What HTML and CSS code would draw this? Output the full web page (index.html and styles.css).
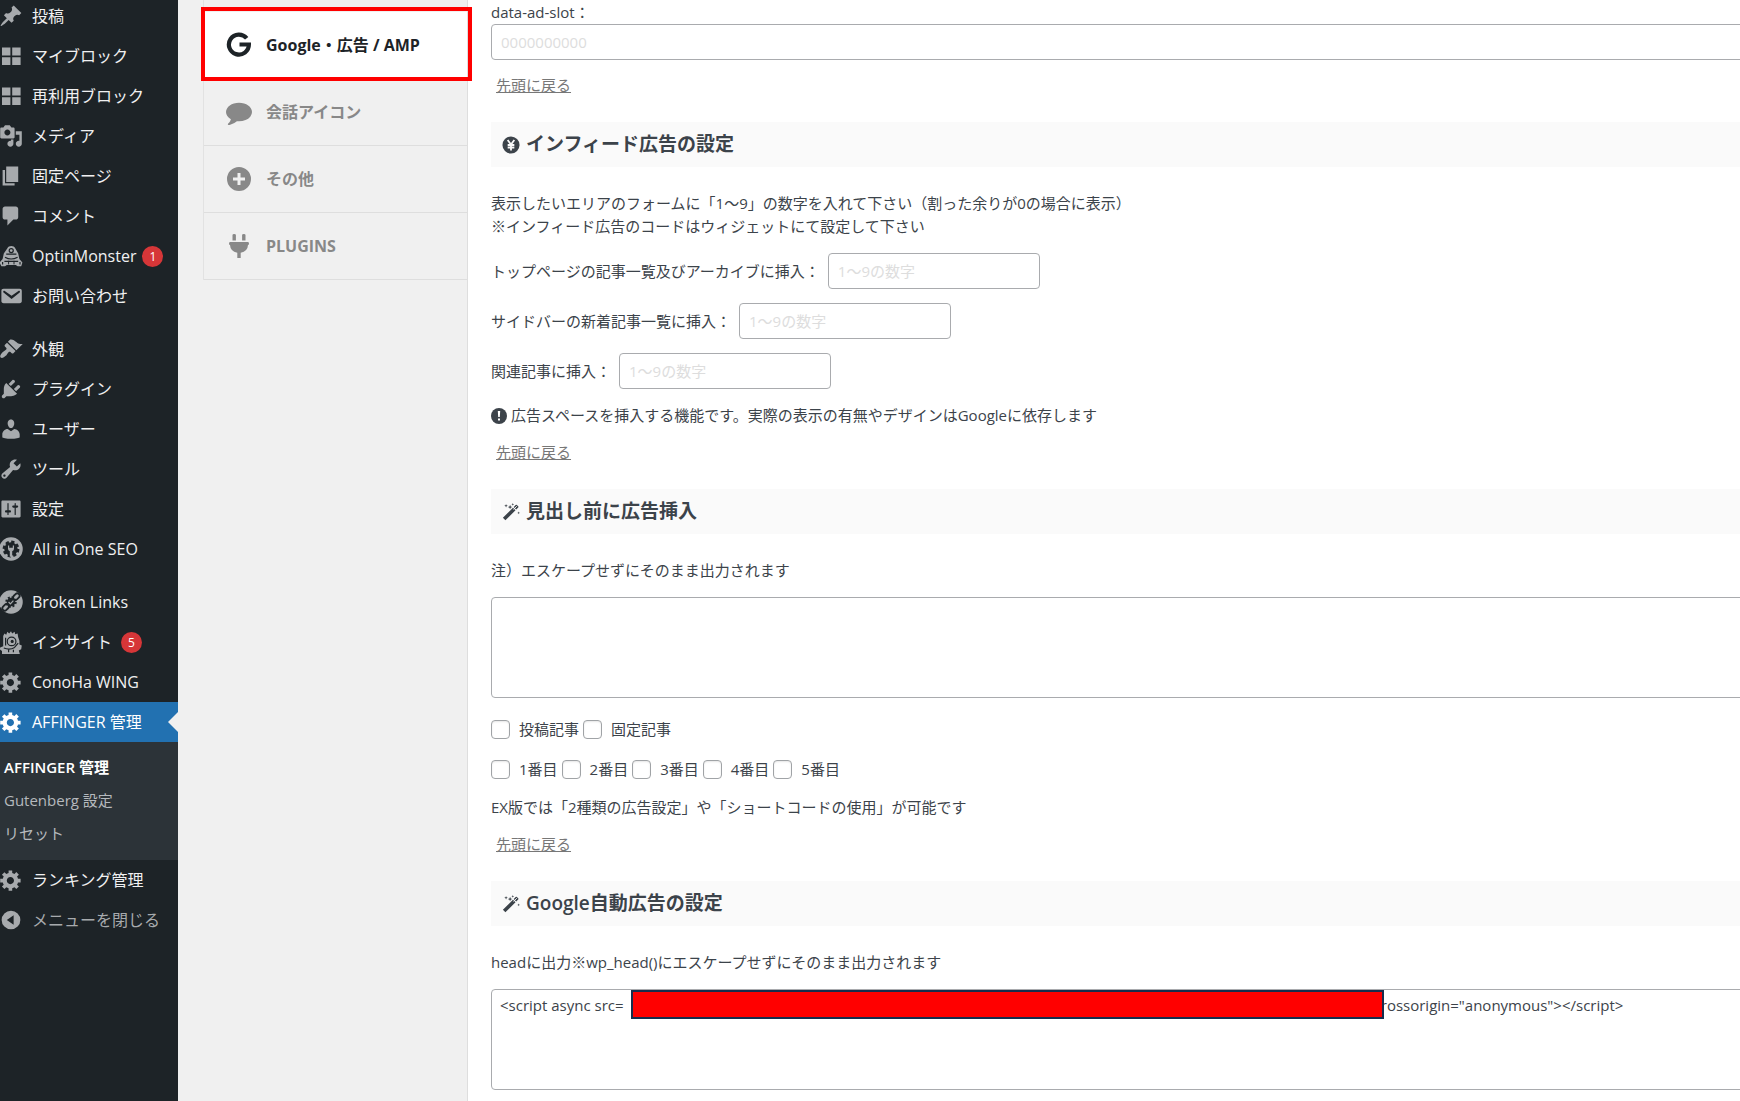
FILE: index.html
```html
<!DOCTYPE html>
<html lang="ja">
<head>
<meta charset="utf-8">
<meta name="viewport" content="width=device-width, initial-scale=1">
<title>AFFINGER 管理</title>
<link rel="stylesheet" href="styles.css">
</head>
<body>
<svg class="sprite" aria-hidden="true">
  <symbol id="i-gear" viewBox="0 0 20 20"><path d="M18 12h-2.18c-.17.7-.44 1.35-.81 1.93l1.54 1.54-2.1 2.1-1.54-1.54c-.58.36-1.23.63-1.91.79V19H8v-2.18c-.68-.16-1.33-.43-1.91-.79l-1.54 1.54-2.12-2.12 1.54-1.54c-.36-.58-.63-1.23-.79-1.91H1V9.03h2.17c.16-.7.44-1.35.8-1.94L2.43 5.55l2.1-2.1 1.54 1.54c.58-.37 1.24-.64 1.93-.81V2h3v2.18c.68.16 1.33.43 1.91.79l1.54-1.54 2.12 2.12-1.54 1.54c.36.59.64 1.24.8 1.94H18V12zm-8.5 1.5c1.66 0 3-1.34 3-3s-1.34-3-3-3-3 1.34-3 3 1.34 3 3 3z"/></symbol>
  <symbol id="i-blocks" viewBox="0 0 20 20"><path d="M2.500 3h7v6.500h-7zM11 3h7v6.500h-7zM2.500 11h7v6.500h-7zM11 11h7v6.500h-7z"/></symbol>
  <symbol id="i-wand" viewBox="0 0 20 20"><path d="M1 16.500 12.200 5.300l2.800 2.800L3.800 19.300zM13 4.500l2.200-2.200q.7-.6 1.400 0l1.400 1.400q.6.700 0 1.400l-2.200 2.200z"/><path d="M4.500 1l.5 1.500 1.500.5-1.500.5-.5 1.500-.5-1.500L2.500 3 4 2.500zM9 2l.7 1.800 1.800.7-1.800.7L9 7l-.7-1.800-1.800-.7 1.800-.7zM12 0l.4 1.100 1.100.4-1.100.4L12 3l-.4-1.100-1.100-.4 1.100-.4zM18.500 9.500l.4 1.100 1.100.4-1.100.4-.4 1.100-.4-1.100L17 11l1.100-.4z"/><path d="M12.800 7.200l3.700-3.700" stroke="#fafafa" stroke-width="1"/></symbol>
</svg>

<div class="page">
  <nav class="admin-menu" aria-label="管理メニュー">
    <ul class="menu-list">
      <li><a class="menu-link" href="#"><svg class="menu-icon" viewBox="0 0 20 20"><path d="M10.440 3.020l1.820-1.820 6.360 6.350-1.830 1.820c-1.050-.68-2.480-.57-3.410.36l-.75.75c-.92.93-1.040 2.350-.35 3.410l-1.830 1.820-2.410-2.410-2.800 2.790c-.42.42-3.380 2.710-3.800 2.290s1.860-3.390 2.280-3.810l2.790-2.790L4.100 9.360l1.830-1.820c1.050.69 2.480.57 3.400-.36l.75-.75c.93-.92 1.050-2.350.36-3.410z"/></svg>投稿</a></li>
      <li><a class="menu-link" href="#"><svg class="menu-icon"><use href="#i-blocks"/></svg>マイブロック</a></li>
      <li><a class="menu-link" href="#"><svg class="menu-icon"><use href="#i-blocks"/></svg>再利用ブロック</a></li>
      <li><a class="menu-link" href="#"><svg class="menu-icon" viewBox="0 0 20 20"><path d="M13 11V4c0-.55-.45-1-1-1h-1.670L9 1H5L3.670 3H2c-.55 0-1 .45-1 1v7c0 .55.45 1 1 1h10c.55 0 1-.45 1-1zM7 4.500c1.380 0 2.500 1.120 2.500 2.500S8.380 9.500 7 9.500 4.500 8.380 4.500 7 5.620 4.500 7 4.500zM14 6h5v10.500c0 1.380-1.120 2.500-2.500 2.500S14 17.880 14 16.500s1.120-2.500 2.500-2.500c.17 0 .34.02.5.05V9h-3V6zm-4 8.050V13h2v3.500c0 1.380-1.120 2.500-2.500 2.500S7 17.880 7 16.500 8.120 14 9.500 14c.17 0 .34.02.5.05z"/></svg>メディア</a></li>
      <li><a class="menu-link" href="#"><svg class="menu-icon" viewBox="0 0 20 20"><path d="M6 15V2h10v13H6zm-1 1h8v2H3V5h2v11z"/></svg>固定ページ</a></li>
      <li><a class="menu-link" href="#"><svg class="menu-icon" viewBox="0 0 20 20"><path d="M5 2h9c1.100 0 2 .9 2 2v7c0 1.100-.9 2-2 2h-2l-5 5v-5H5c-1.100 0-2-.9-2-2V4c0-1.100.9-2 2-2z"/></svg>コメント</a></li>
      <li><a class="menu-link" href="#"><svg class="menu-icon" viewBox="0 0 20 20"><path d="M7 3.500C8 1 12.500 1 13.500 3.500L16 8l1 4.500 2.500 3-1 3h-3l-1.500-1H6.500l-1.500 1H2l-1.500-3L3 12.500 4 8z"/><g fill="none" stroke="#1d2327"><path d="M6 8.500h8.500M5 11q5 3 10.500 0M4.500 14.500h11.500M3 15v2M17.500 15v2"/><circle cx="10.200" cy="5.500" r="1.700"/><path d="M8 14v3M12.500 14v3" stroke-width=".8"/></g></svg>OptinMonster <span class="badge">1</span></a></li>
      <li><a class="menu-link" href="#"><svg class="menu-icon" viewBox="0 0 20 20"><path d="M3.870 4h13.250C18.370 4 19 4.590 19 5.790v8.420c0 1.190-.63 1.790-1.880 1.790H3.870c-1.250 0-1.880-.6-1.880-1.790V5.790c0-1.200.63-1.790 1.880-1.790zm6.620 8.600l6.740-5.530c.24-.2.430-.66.130-1.070-.29-.41-.82-.42-1.170-.17l-5.700 3.860L4.800 5.830c-.35-.25-.88-.24-1.170.17-.3.410-.11.870.13 1.070z"/></svg>お問い合わせ</a></li>
      <li class="menu-gap"><a class="menu-link" href="#"><svg class="menu-icon" viewBox="0 0 20 20"><path d="M14.480 11.060L7.410 3.990l1.500-1.500c.5-.56 2.300-.47 3.510.32 1.210.8 1.430 1.280 2.910 2.100 1.180.64 2.450 1.260 4.450.85zm-.71.71L6.700 4.700 4.930 6.470c-.39.39-.39 1.020 0 1.410l1.060 1.060c.39.39.39 1.030 0 1.420-.6.6-1.430 1.110-2.210 1.690-.35.26-.7.53-1.010.84C1.430 14.230.4 16.080 1.400 17.070c.99 1 2.840-.03 4.180-1.360.31-.31.58-.66.85-1.020.57-.78 1.080-1.610 1.690-2.210.39-.39 1.020-.39 1.410 0l1.060 1.060c.39.39 1.020.39 1.410 0z"/></svg>外観</a></li>
      <li><a class="menu-link" href="#"><svg class="menu-icon" viewBox="0 0 20 20"><path d="M13.110 4.360L9.870 7.600 8 5.730l3.240-3.240c.35-.34 1.050-.2 1.560.32.52.51.66 1.210.31 1.550zm-8 1.770l.91-1.120 9.010 9.010-1.190.84c-.71.71-2.630 1.160-3.820 1.160H6.140L4.900 17.260c-.59.59-1.540.59-2.120 0-.59-.58-.59-1.530 0-2.120l1.240-1.240v-3.880c0-1.130.4-3.190 1.090-3.890zm7.260 3.970l3.240-3.240c.34-.35 1.040-.21 1.550.31.52.51.66 1.210.31 1.550l-3.240 3.250z"/></svg>プラグイン</a></li>
      <li><a class="menu-link" href="#"><svg class="menu-icon" viewBox="0 0 20 20"><path d="M10 9.250c-2.270 0-2.730-3.440-2.730-3.440C7 4.020 7.820 2 9.970 2c2.160 0 2.980 2.020 2.710 3.810 0 0-.41 3.440-2.680 3.440zm0 2.570L12.720 10c2.390 0 4.520 2.330 4.520 4.530v2.490s-3.650 1.130-7.240 1.130c-3.650 0-7.240-1.130-7.240-1.130v-2.490c0-2.250 1.940-4.480 4.470-4.480z"/></svg>ユーザー</a></li>
      <li><a class="menu-link" href="#"><svg class="menu-icon" viewBox="0 0 20 20"><path d="M16.680 9.770c-1.340 1.340-3.300 1.670-4.950.99l-5.410 6.520c-.99.99-2.590.99-3.580 0s-.99-2.590 0-3.570l6.520-5.420c-.68-1.650-.35-3.610.99-4.950 1.280-1.280 3.120-1.620 4.720-1.060l-2.890 2.890 2.820 2.820 2.860-2.870c.53 1.580.18 3.390-1.080 4.650zM3.810 16.210c.4.390 1.040.390 1.430 0 .4-.4.4-1.040 0-1.430-.39-.4-1.030-.4-1.430 0-.39.390-.39 1.030 0 1.430z"/></svg>ツール</a></li>
      <li><a class="menu-link" href="#"><svg class="menu-icon" viewBox="0 0 20 20"><path d="M18 16V4c0-.55-.45-1-1-1H3c-.55 0-1 .45-1 1v12c0 .55.45 1 1 1h14c.55 0 1-.45 1-1zM8 11h1c.55 0 1 .45 1 1s-.45 1-1 1H8v1.500c0 .28-.22.5-.5.5s-.5-.22-.5-.5V13H6c-.55 0-1-.45-1-1s.45-1 1-1h1V5.500c0-.28.22-.5.5-.5s.5.220.5.5V11zm5-2h-1c-.55 0-1-.45-1-1s.45-1 1-1h1V5.500c0-.28.22-.5.5-.5s.5.220.5.5V7h1c.55 0 1 .45 1 1s-.45 1-1 1h-1v5.500c0 .28-.22.5-.5.5s-.5-.22-.5-.5V9z"/></svg>設定</a></li>
      <li><a class="menu-link" href="#"><svg class="menu-icon" viewBox="0 0 20 20"><circle cx="10" cy="10" r="9.800"/><circle cx="10" cy="10" r="5.600" fill="#1d2327"/><circle cx="10" cy="10" r="6" fill="none" stroke="#1d2327" stroke-width="2" stroke-dasharray="2.710 2"/><path d="M8.500 7v2h3V7h1v2.800q0 1.700-1.500 2v4.700H9v-4.700q-1.500-.3-1.500-2V7z"/></svg>All in One SEO</a></li>
      <li class="menu-gap"><a class="menu-link" href="#"><svg class="menu-icon" viewBox="0 0 20 20"><circle cx="10" cy="10" r="9.800"/><circle cx="10" cy="10" r="3.600" fill="#1d2327"/><g fill="none" stroke="#1d2327" stroke-width="1.500"><circle cx="10" cy="10" r="4" stroke-dasharray="1.640 1.500"/><rect x="11.500" y="3.500" width="6" height="4" rx="2" transform="rotate(-45 14.500 5.500)"/><rect x="2.500" y="12.500" width="6" height="4" rx="2" transform="rotate(-45 5.500 14.500)"/></g><path d="M8 10l1.500 1.500L12 8.800" fill="none" stroke="#a7aaad"/></svg>Broken Links</a></li>
      <li><a class="menu-link" href="#"><svg class="menu-icon" viewBox="0 0 20 20"><path d="M3.500 5l1-2 1.500 1 1-2.500L8.500 3l1.500-2 1 2 2-1.500.5 2 2-.5.500 3 1 3v3l2 1-.5 3-2 1 1 3.500H2.500v-3L.5 16l.5-1.500 2.500-1z"/><g fill="none" stroke="#1d2327"><circle cx="10.500" cy="9.500" r="3.600"/><path d="M4 15q5 2 9-.5l3-3.500M5.500 6.500V13M8 16.500v2M12 16.500v2"/></g><circle cx="11" cy="9.500" r="1.300" fill="#1d2327"/></svg>インサイト <span class="badge badge-wide">5</span></a></li>
      <li><a class="menu-link" href="#"><svg class="menu-icon"><use href="#i-gear"/></svg>ConoHa WING</a></li>
      <li>
        <a class="menu-link menu-current" href="#" aria-current="page"><svg class="menu-icon"><use href="#i-gear"/></svg>AFFINGER 管理</a>
        <ul class="submenu">
          <li><a class="submenu-link submenu-current" href="#">AFFINGER 管理</a></li>
          <li><a class="submenu-link" href="#">Gutenberg 設定</a></li>
          <li><a class="submenu-link" href="#">リセット</a></li>
        </ul>
      </li>
      <li><a class="menu-link" href="#"><svg class="menu-icon"><use href="#i-gear"/></svg>ランキング管理</a></li>
      <li><button class="menu-link menu-collapse" type="button"><svg class="menu-icon" viewBox="0 0 20 20"><path d="M10 2.200a7.800 7.800 0 1 0 0 15.600 7.800 7.800 0 0 0 0-15.600zM12.200 14L6.500 10l5.700-4z" fill-rule="evenodd"/></svg>メニューを閉じる</button></li>
    </ul>
  </nav>

  <aside class="tabs-column">
    <ul class="tabs">
      <li><a class="tab tab-active" href="#"><svg class="tab-icon" viewBox="0 0 26 26"><path d="M20.700 6.300A10 10 0 1 0 22.900 12.500H13.500" fill="none" stroke="currentColor" stroke-width="4.200"/></svg>Google・広告 / AMP</a></li>
      <li><a class="tab" href="#"><svg class="tab-icon" viewBox="0 0 1792 1792"><path d="M1792 896q0 174-120 321.500t-326 233-450 85.500q-70 0-145-8-198 175-460 242-49 14-114 22-17 2-30.500-9t-17.500-29v-1q-3-4-.5-12t2-10 4.500-9.500l6-9 7-8.500 8-9q7-8 31-34.500t34.500-38 31-39.500 32.500-51 27-59 26-76q-157-89-247.500-220t-90.500-281q0-130 71-248.500t191-204.500 286-136.500 348-50.500 348 50.500 286 136.500 191 204.500 71 248.500z"/></svg>会話アイコン</a></li>
      <li><a class="tab" href="#"><svg class="tab-icon" viewBox="0 0 26 26"><path d="M13 1a12 12 0 1 0 0 24 12 12 0 0 0 0-24zM11.500 7h3v4.500H19v3h-4.500V19h-3v-4.500H7v-3h4.500z"/></svg>その他</a></li>
      <li><a class="tab" href="#"><svg class="tab-icon" viewBox="0 0 26 26"><path d="M6.500 2q0-1 1.700-1t1.700 1v5.500H6.500zM16.100 2q0-1 1.700-1t1.700 1v5.500h-3.400zM4 9h18q1 0 1 1.500T22 12q-.3 6.300-7.300 7.800V25h-3.400v-5.200Q4.300 18.300 4 12q-1 0-1-1.500T4 9z"/></svg>PLUGINS</a></li>
    </ul>
  </aside>

  <main class="content">
    <label class="slot-label" for="ad-slot">data-ad-slot：</label>
    <input class="field field-full" id="ad-slot" type="text" placeholder="0000000000">
    <p class="back"><a href="#">先頭に戻る</a></p>

    <h2 class="section-title"><svg class="title-icon" viewBox="0 0 20 20"><circle cx="10" cy="10" r="9.500"/><path d="M6.300 4.500 10 9.500l3.700-5M6.300 10h7.400M6.300 12.800h7.400M10 9.500V16" fill="none" stroke="#fafafa" stroke-width="2"/></svg>インフィード広告の設定</h2>
    <p class="lead">表示したいエリアのフォームに「1～9」の数字を入れて下さい（割った余りが0の場合に表示）<br>※インフィード広告のコードはウィジェットにて設定して下さい</p>
    <div class="field-rows">
      <div class="field-row"><label for="infeed-top">トップページの記事一覧及びアーカイブに挿入：</label><input class="field" id="infeed-top" type="text" placeholder="1～9の数字"></div>
      <div class="field-row"><label for="infeed-side">サイドバーの新着記事一覧に挿入：</label><input class="field" id="infeed-side" type="text" placeholder="1～9の数字"></div>
      <div class="field-row"><label for="infeed-related">関連記事に挿入：</label><input class="field" id="infeed-related" type="text" placeholder="1～9の数字"></div>
    </div>
    <p class="note"><svg class="note-icon" viewBox="0 0 16 16"><circle cx="8" cy="8" r="8"/><path d="M6.800 3h2.400l-.4 6H7.200zM7 10.400h2v2H7z" fill="#fff"/></svg>広告スペースを挿入する機能です。実際の表示の有無やデザインはGoogleに依存します</p>
    <p class="back">
      <a href="#">先頭に戻る</a></p>

    <h2 class="section-title"><svg class="title-icon"><use href="#i-wand"/></svg>見出し前に広告挿入</h2>
    <label class="lead" for="heading-ad">注）エスケープせずにそのまま出力されます</label>
    <textarea class="field field-area" id="heading-ad"></textarea>
    <div class="checks">
      <label><input type="checkbox">投稿記事</label>
      <label><input type="checkbox">固定記事</label>
    </div>
    <div class="checks">
      <label><input type="checkbox">1番目</label>
      <label><input type="checkbox">2番目</label>
      <label><input type="checkbox">3番目</label>
      <label><input type="checkbox">4番目</label>
      <label><input type="checkbox">5番目</label>
    </div>
    <p class="note">EX版では「2種類の広告設定」や「ショートコードの使用」が可能です</p>
    <p class="back"><a href="#">先頭に戻る</a></p>

    <h2 class="section-title"><svg class="title-icon"><use href="#i-wand"/></svg>Google自動広告の設定</h2>
    <label class="lead" for="auto-ad">headに出力※wp_head()にエスケープせずにそのまま出力されます</label>
    <div class="code-wrap">
      <textarea class="field field-area" id="auto-ad" spellcheck="false">&lt;script async src=　　　　　　　　　　　　　　　　　　　　　　　　　　　　　　　　　　　　　　　　　　　　　　　　　　crossorigin="anonymous"&gt;&lt;/script&gt;</textarea>
      <span class="redaction"></span>
    </div>
  </main>
</div>
</body>
</html>
```
FILE: styles.css
```css
* { box-sizing: border-box; }

body {
  margin: 0;
  overflow: hidden;
  background: #f0f0f0;
  color: #3c434a;
  font: 15px/23px "Open Sans", "Noto Sans CJK JP", sans-serif;
}

ul { margin: 0; padding: 0; list-style: none; }
p, h2 { margin: 0; }
svg { flex: none; fill: currentColor; }
.sprite { display: none; }

.page { display: flex; min-height: 100vh; }

/* Admin menu */
.admin-menu { flex: none; width: 178px; background: #1d2327; }
.menu-list { margin-top: -4px; }
.menu-gap { margin-top: 13px; }

.menu-link {
  position: relative;
  display: flex;
  align-items: center;
  gap: 9px;
  width: 100%;
  height: 40px;
  padding: 0;
  border: 0;
  background: none;
  color: #f0f0f1;
  font: 16px/24px "Open Sans", "Noto Sans CJK JP", sans-serif;
  text-decoration: none;
  white-space: nowrap;
}

.menu-icon { width: 24px; height: 24px; margin-left: -1px; color: #a7aaad; }

.badge {
  width: 21px;
  height: 21px;
  margin-left: -3px;
  border-radius: 50%;
  background: #d63638;
  color: #fff;
  font-size: 12px;
  line-height: 21px;
  text-align: center;
}
.badge-wide { margin-left: 0; }

.menu-current { background: #2271b1; color: #fff; }
.menu-current .menu-icon { color: #fff; }
.menu-current::after {
  content: "";
  position: absolute;
  top: 10px;
  right: 0;
  border: 10px solid transparent;
  border-left: 0;
  border-right-color: #f0f0f0;
}
.menu-collapse { color: #a7aaad; }

.submenu { padding: 9px 0 10px; background: #2c3338; }
.submenu-link {
  display: block;
  padding-left: 4px;
  color: #b5b9bd;
  line-height: 33px;
  text-decoration: none;
}
.submenu-current { color: #fff; font-weight: 600; }

/* Setting tabs */
.tabs-column {
  flex: none;
  width: 290px;
  padding-left: 25px;
  border-right: 1px solid #dedede;
}
.tabs { padding-top: 12px; border-left: 1px solid #e2e2e2; }
.tab {
  display: flex;
  align-items: center;
  gap: 14px;
  height: 67px;
  padding-left: 22px;
  border-bottom: 1px solid #dedede;
  color: #888;
  font-size: 16px;
  font-weight: 700;
  text-decoration: none;
}
.tab-icon { width: 26px; height: 26px; }
.tab-active {
  position: relative;
  background: #fff;
  color: #1d2327;
}
.tab-active::after {
  content: "";
  position: absolute;
  inset: -5px -5px -3px -3px;
  border: 4px solid #f00;
}

/* Settings form */
.content {
  flex: 1;
  min-width: 0;
  padding: 1px 0 8px 23px;
  background: #fff;
}

.field {
  display: block;
  width: 212px;
  height: 36px;
  padding: 0 9px;
  border: 1px solid #a9abae;
  border-radius: 4px;
  background: #fff;
  color: #3c434a;
  font: inherit;
}
.field::placeholder { color: #ddd; opacity: 1; }
.field-full { width: calc(100% + 16px); }
.field-area {
  width: calc(100% + 16px);
  height: 101px;
  padding: 4px 8px;
  resize: none;
  overflow: hidden;
}

.slot-label { display: block; }
.back { padding: 14px 0 0 5px; }
.back a { color: #777; }

.section-title {
  display: flex;
  align-items: center;
  gap: 6px;
  height: 45px;
  margin-top: 25px;
  padding-left: 11px;
  background: #fafafa;
  font-size: 19px;
  font-weight: 600;
}
.title-icon { width: 18px; height: 18px; }

.lead { display: block; padding: 25px 0 15px; }

.field-rows { display: grid; gap: 14px; }
.field-row { display: flex; align-items: center; gap: 8px; }

.note { display: flex; align-items: center; gap: 4px; margin-top: 15px; }
.note-icon { width: 16px; height: 16px; }

.checks { display: flex; gap: 4px; margin-top: 20px; height: 23px; }
.checks + .checks { margin-top: 17px; }
.checks label { display: flex; align-items: center; gap: 9px; }
.checks input {
  appearance: none;
  width: 19px;
  height: 19px;
  margin: 0;
  border: 1px solid #a0a3a6;
  border-radius: 4px;
  background: #fff;
  box-shadow: inset 0 1px 2px rgba(0, 0, 0, .1);
}

.code-wrap { position: relative; }
.redaction {
  position: absolute;
  top: 1px;
  left: 140px;
  width: 753px;
  height: 29px;
  border: 2px solid #172d4d;
  background: #f00;
}
```
